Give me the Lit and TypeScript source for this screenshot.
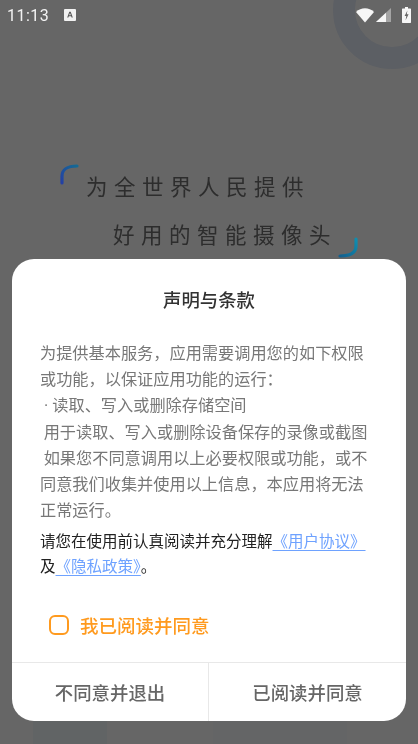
import { LitElement, html, css } from "lit";
import { customElement } from "lit/decorators.js";

@customElement("app-root")
export class AppRoot extends LitElement {
  static styles = css`
    :host {
      display: block;
      position: relative;
      width: 418px;
      height: 744px;
      overflow: hidden;
      background: #fff;
      font-family: "Noto Sans CJK SC", "Noto Sans", sans-serif;
    }
    .page { position: absolute; inset: 0; filter: blur(0.3px); }
    .ring {
      position: absolute;
      left: 333px;
      top: -49px;
      width: 118px;
      height: 118px;
      box-sizing: border-box;
      border: 22px solid #e6edf9;
      border-radius: 50%;
    }
    .poster {
      display: flex;
      flex-direction: column;
      padding-top: 172px;
      filter: blur(0.3px);
    }
    .line {
      font-size: 21.5px;
      line-height: 28px;
      letter-spacing: 6.5px;
      white-space: nowrap;
      color: #707070;
    }
    .l1 { padding-left: 86px; }
    .l2 { padding-left: 113px; padding-top: 20px; }
    .peek {
      position: absolute;
      left: 0;
      right: 0;
      bottom: 0;
      height: 24px;
      display: flex;
      padding-left: 33px;
    }
    .p1 { width: 74px; background: #f2f9fd; }
    .p2 { width: 134px; margin-left: 106px; background: #fafcfe; }
    .bracket { position: absolute; }
    .b1 { left: 59px; top: 163px; }
    .b2 { left: 337px; top: 236px; }
    .scrim {
      position: absolute;
      inset: 0;
      background: rgba(0, 0, 0, 0.6);
    }
    .status {
      position: absolute;
      top: 0;
      left: 0;
      right: 0;
      height: 30px;
      display: flex;
      align-items: center;
      padding: 0 7px 0 7px;
      box-sizing: border-box;
      color: #f2f2f2;
    }
    .time {
      font-family: Roboto, sans-serif;
      font-size: 16px;
      letter-spacing: 0.5px;
      margin-right: 15px;
    }
    .spacer { flex: 1; }
    .status svg { display: block; }
    .sicons { display: flex; align-items: center; gap: 2px; }
    .batt { margin-left: 9px; }
    .dialog {
      position: absolute;
      left: 12px;
      top: 259px;
      width: 394px;
      height: 461.5px;
      background: #fff;
      border-radius: 22px;
      display: flex;
      flex-direction: column;
      overflow: hidden;
    }
    .title {
      margin-top: 26px;
      text-align: center;
      font-size: 18.4px;
      line-height: 28px;
      font-weight: 500;
      color: #333;
    }
    .body {
      margin: 26px 28px 0;
      font-size: 16.2px;
      line-height: 26.2px;
      color: #777;
    }
    .body p { margin: 0; white-space: pre; }
    .dot { font-family: Roboto, sans-serif; line-height: 0; }
    .notice {
      margin: 6px 28px 0;
      font-size: 15.5px;
      line-height: 25px;
      color: #222;
      white-space: nowrap;
    }
    .notice a {
      color: #6ea2ff;
      text-decoration: underline;
      text-underline-offset: 3px;
      text-decoration-thickness: 1px;
    }
    .agree {
      display: flex;
      align-items: center;
      gap: 11px;
      margin: 34px 0 0 37px;
      font-size: 18.5px;
      line-height: 26px;
      font-weight: 500;
      color: #ff9a1e;
    }
    .box {
      box-sizing: border-box;
      width: 20px;
      height: 20px;
      border: 2.5px solid #ff9a1e;
      border-radius: 6px;
    }
    .actions {
      margin-top: auto;
      height: 58px;
      border-top: 1px solid #e8e8e8;
      display: grid;
      grid-template-columns: 197px 1fr;
      font-size: 18.4px;
      font-weight: 500;
      color: #666;
    }
    .actions div {
      display: flex;
      align-items: center;
      justify-content: center;
    }
    .actions div:first-child { border-right: 1px solid #e8e8e8; }
  `;

  render() {
    return html`
      <div class="page">
        <div class="ring"></div>
        <div class="poster">
          <div class="line l1">为全世界人民提供</div>
          <div class="line l2">好用的智能摄像头</div>
        </div>
        <div class="peek"><div class="p1"></div><div class="p2"></div></div>
        <div class="scrim"></div>
        <svg class="bracket b1" width="22" height="24" viewBox="0 0 22 24" fill="none">
          <defs>
            <linearGradient id="g1" x1="1" y1="0" x2="0" y2="1">
              <stop offset="0" stop-color="#146a94" />
              <stop offset="1" stop-color="#2440a4" />
            </linearGradient>
          </defs>
          <path d="M3 20V13C3 7 8 3 18 3" stroke="url(#g1)" stroke-width="3.2" stroke-linecap="round" />
        </svg>
        <svg class="bracket b2" width="22" height="24" viewBox="0 0 22 24" fill="none">
          <defs>
            <linearGradient id="g2" x1="1" y1="0" x2="0" y2="1">
              <stop offset="0" stop-color="#0e8eb0" />
              <stop offset="1" stop-color="#14608e" />
            </linearGradient>
          </defs>
          <path d="M19 3V10C19 17 14 20 3 20" stroke="url(#g2)" stroke-width="3.2" stroke-linecap="round" />
        </svg>
        <div class="status">
          <span class="time">11:13</span>
          <svg width="12" height="12" viewBox="0 0 12 12">
            <rect width="12" height="12" rx="1" fill="#f2f2f2" />
            <path d="M3.2 8.5 5.300 2.800h1.400L8.800 8.500H7.600L7.200 7.200H4.800L4.400 8.500ZM5.100 6.200h1.800L6 3.900Z" fill="#555" />
          </svg>
          <span class="spacer"></span>
          <span class="sicons">
            <svg width="18" height="15" viewBox="0 0 18 15"><path d="M0 4C5-1 13-1 18 4L9 14.500Z" fill="#f6f6f6" /></svg>
            <svg width="15" height="14" viewBox="0 0 15 14"><path d="M15 0V14H0Z" fill="#a4a4a4" /><path d="M10 4.700V14H0Z" fill="#f6f6f6" /></svg>
            <svg class="batt" width="9" height="16" viewBox="0 0 9 16"><path d="M3 0H6V1.500H8.400Q9 1.500 9 2.200V15.300Q9 16 8.400 16H.6Q0 16 0 15.300V2.200Q0 1.500 .6 1.500H3Z" fill="#f6f6f6" /><path d="M5.400 3.500 2.600 9H4.300L3.600 13.300 6.600 7.300H4.800Z" fill="#666" /></svg>
          </span>
        </div>
        <div class="dialog">
          <div class="title">声明与条款</div>
          <div class="body">
            <p>为提供基本服务，应用需要调用您的如下权限</p>
            <p>或功能，以保证应用功能的运行：</p>
            <p><span class="dot"> · </span>读取、写入或删除存储空间</p>
            <p> 用于读取、写入或删除设备保存的录像或截图</p>
            <p> 如果您不同意调用以上必要权限或功能，或不</p>
            <p>同意我们收集并使用以上信息，本应用将无法</p>
            <p>正常运行。</p>
          </div>
          <div class="notice">
            请您在使用前认真阅读并充分理解<a>《用户协议》</a><br />及<a>《隐私政策》</a>。
          </div>
          <div class="agree"><span class="box"></span><span>我已阅读并同意</span></div>
          <div class="actions">
            <div>不同意并退出</div>
            <div>已阅读并同意</div>
          </div>
        </div>
      </div>
    `;
  }
}
